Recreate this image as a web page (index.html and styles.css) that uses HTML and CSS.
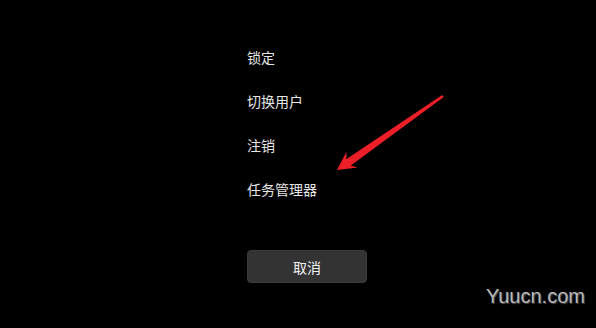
FILE: index.html
```html
<!DOCTYPE html>
<html lang="zh-CN">
<head>
<meta charset="utf-8">
<link rel="stylesheet" href="styles.css">
</head>
<body>
<div class="screen">
  <ul class="menu">
    <li class="item">锁定</li>
    <li class="item">切换用户</li>
    <li class="item">注销</li>
    <li class="item">任务管理器</li>
  </ul>
  <button class="cancel">取消</button>
  <svg class="arrow" width="596" height="328" viewBox="0 0 596 328">
    <polygon fill="#ec1f28" points="337,170 346.5,151.8 346.2,159.2 442.2,94.9 443.8,97.1 350.8,165.4 357.8,167.6"/>
  </svg>
  <div class="watermark">Yuucn.com</div>
</div>
</body>
</html>
```
FILE: styles.css
```css
html, body {
  margin: 0;
  padding: 0;
  background: #000;
}
.screen {
  position: relative;
  width: 596px;
  height: 328px;
  overflow: hidden;
  background: #000;
  font-family: "Noto Sans CJK SC", "Liberation Sans", sans-serif;
  display: flex;
  flex-direction: column;
  align-items: flex-start;
  padding: 35px 0 0 247px;
  box-sizing: border-box;
}
.menu {
  list-style: none;
  margin: 0;
  padding: 0;
  display: flex;
  flex-direction: column;
}
.item {
  height: 44px;
  line-height: 44px;
  font-size: 14px;
  color: #e6e6e6;
}
.cancel {
  margin-top: 39px;
  width: 120px;
  height: 33px;
  background: #333333;
  border: 1px solid #3a3a3a;
  border-radius: 4px;
  color: #f2f2f2;
  font-family: "Noto Sans CJK SC", sans-serif;
  font-size: 14px;
  padding: 0;
}
.arrow {
  position: absolute;
  left: 0;
  top: 0;
}
.watermark {
  position: absolute;
  left: 486px;
  top: 284px;
  font-family: "Liberation Sans", Arial, sans-serif;
  font-size: 20px;
  line-height: 24px;
  color: #b8b8b8;
  text-shadow: 1px 1px 1px #555;
}
```
